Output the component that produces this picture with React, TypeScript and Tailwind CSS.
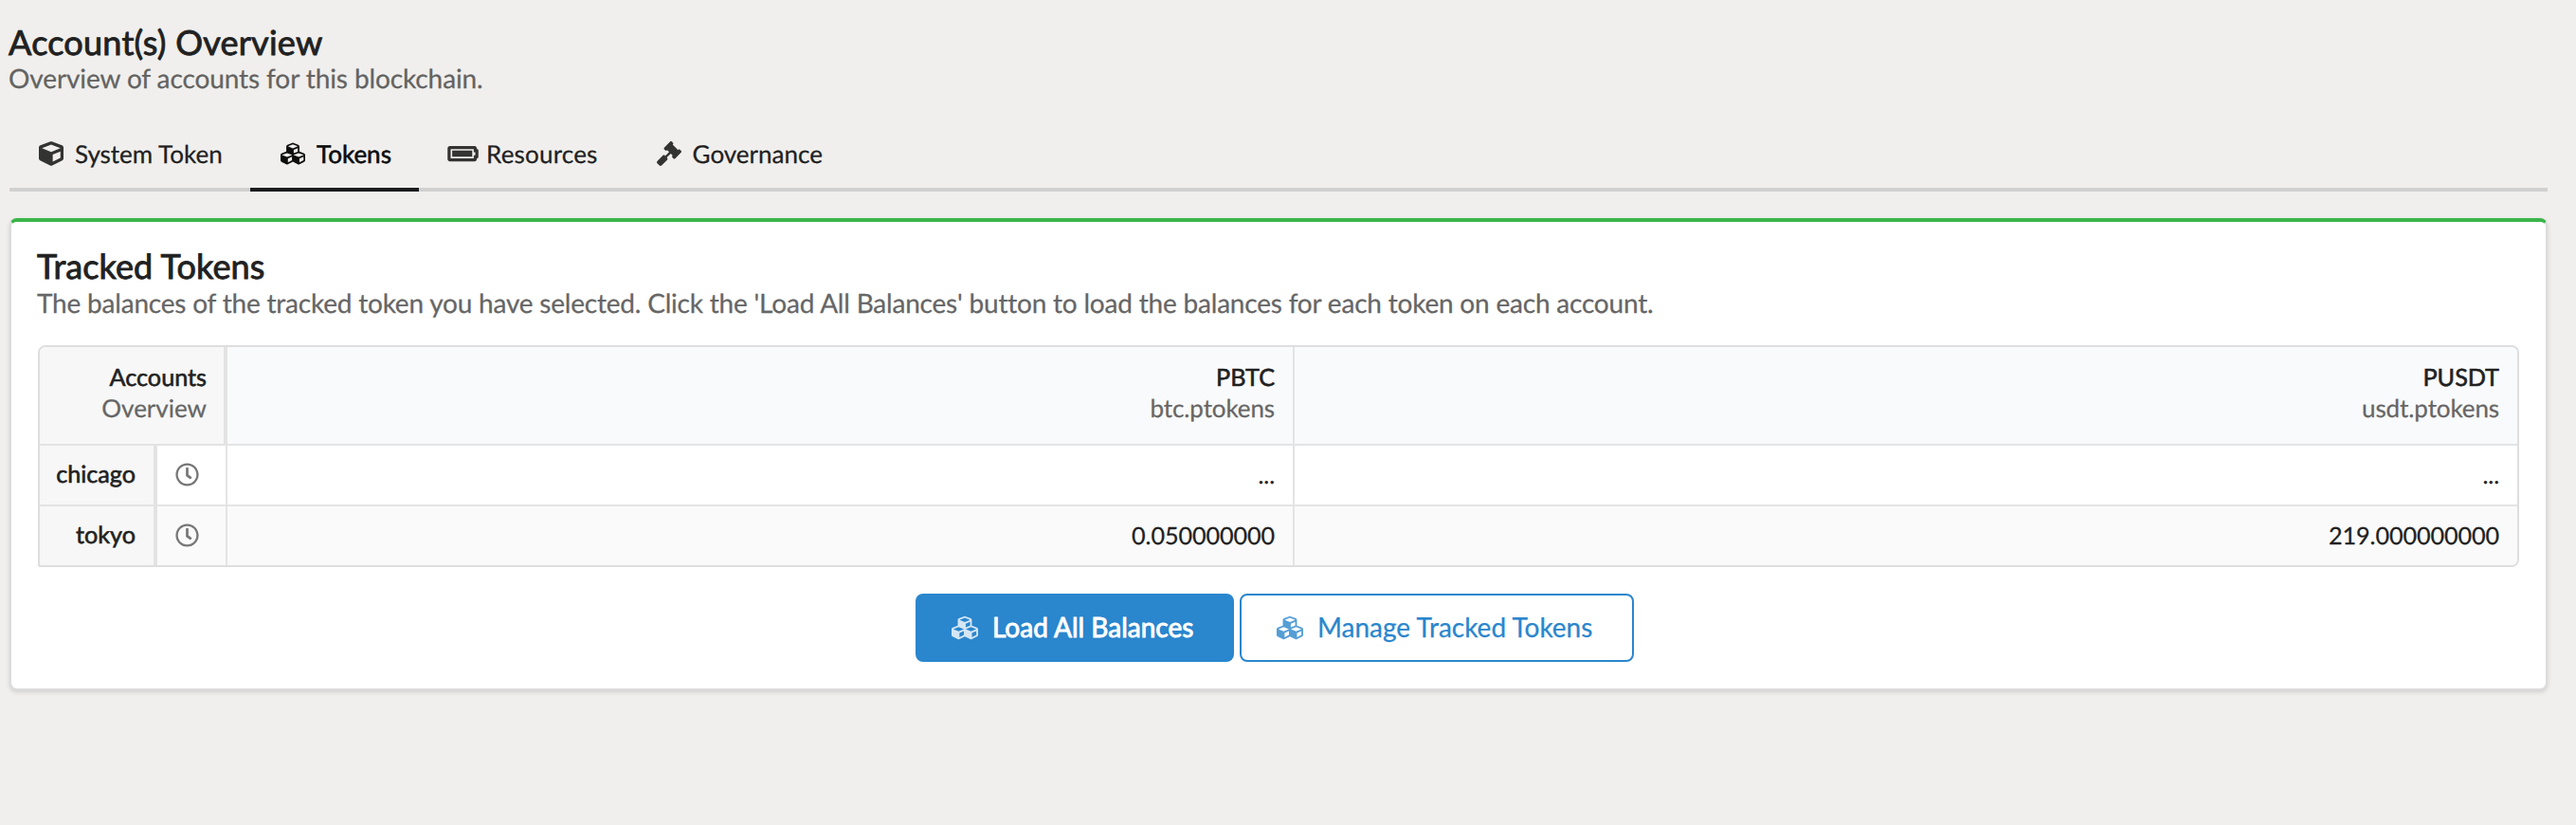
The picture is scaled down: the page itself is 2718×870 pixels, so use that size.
import React from "react";
import { FaCube, FaCubes, FaBatteryFull, FaGavel, FaRegClock } from "react-icons/fa";

const tokens = [
  { symbol: "PBTC", contract: "btc.ptokens" },
  { symbol: "PUSDT", contract: "usdt.ptokens" },
];

const rows = [
  { name: "chicago", values: ["...", "..."], bg: "bg-white" },
  { name: "tokyo", values: ["0.050000000", "219.000000000"], bg: "bg-[#fafafa]" },
];

const heavy = "[-webkit-text-stroke:0.9px_currentColor]";
const medium = "[-webkit-text-stroke:0.6px_currentColor]";

export default function App() {
  return (
    <div className="h-[870px] w-[2718px] bg-[#f0efed] pt-[22px] pl-[10px] pr-[30px] font-['Lato',sans-serif] text-[26px] leading-[32px] text-[#212121] [text-rendering:geometricPrecision] [-webkit-text-stroke:0.25px_currentColor]">
      <h1 className={`-ml-px text-[36px] leading-[44px] tracking-[0.25px] ${heavy}`}>Account(s) Overview</h1>
      <p className="-ml-px text-[28px] leading-[32px] tracking-[-0.1px] text-[#636362]">Overview of accounts for this blockchain.</p>

      <nav className="mt-[34px] flex h-[70px] border-b-4 border-[#d1d1d1]">
        <a className="flex h-[70px] w-[254px] items-center pl-[31px] pb-[10px]">
          <FaCube className="mr-[12px] size-[26px] text-[#333331]" />
          System Token
        </a>
        <a className="flex h-[70px] w-[178px] items-center border-b-4 border-[#1b1c1d] pl-[32px] pb-[6px] text-[#0d0d0d]">
          <FaCubes className="mr-[12px] size-[26px]" />
          <span className={medium}>Tokens</span>
        </a>
        <a className="flex h-[70px] items-center pl-[30px] pb-[10px]">
          <FaBatteryFull className="mr-[8px] h-[26px] w-[33px] text-[#333331]" />
          <span className="tracking-[0.2px]">Resources</span>
        </a>
        <a className="flex h-[70px] items-center pl-[62px] pb-[10px]">
          <FaGavel className="mr-[12px] size-[26px] text-[#333331]" />
          Governance
        </a>
      </nav>

      <section className="mt-[28px] h-[498px] rounded-[8px] border-2 border-t-4 border-[#dcdcdc] border-t-[#3ab54a] bg-white px-[28px] pt-[24px] shadow-[0_2px_4px_0_rgba(34,36,38,0.15)]">
        <h2 className={`-ml-px text-[36px] leading-[44px] tracking-[0.1px] ${heavy}`}>Tracked Tokens</h2>
        <p className="-ml-px pt-px text-[28px] leading-[32px] tracking-[-0.2px] text-[#666666]">
          The balances of the tracked token you have selected. Click the 'Load All Balances' button to load the balances for each token on each account.
        </p>

        <div className="mt-[29px] grid h-[234px] w-[2618px] grid-cols-[124px_74px_1126px_1fr] grid-rows-[104px_64px_62px] overflow-hidden rounded-[8px] rounded-bl-[2px] border-2 border-[#dedede] text-right text-[25.2px]">
          <div className="col-span-2 border-b-2 border-r-4 border-[#e3e3e3] bg-[#f7f7f7] pt-[17px] pr-[18px]">
            <div className={`leading-[31px] ${medium}`}>Accounts</div>
            <div className="text-[26px] text-[#666666]">Overview</div>
          </div>
          {tokens.map((token, i) => (
            <div key={token.symbol} className={`border-b-2 border-[#e3e4e5] bg-[#f9fafb] pt-[17px] pr-[19px] ${i === 0 ? "border-r-2" : ""}`}>
              <div className={`leading-[31px] ${medium}`}>{token.symbol}</div>
              <div className="text-[26px] tracking-[-0.1px] text-[#666666]">{token.contract}</div>
            </div>
          ))}
          {rows.map((row, i) => {
            const line = i === 0 ? "border-b-2" : "";
            return (
              <React.Fragment key={row.name}>
                <div className={`${line} border-r-4 border-[#e3e3e3] bg-[#f7f7f7] pt-[14px] pr-[19px] ${medium}`}>{row.name}</div>
                <div className={`${line} flex border-r-2 border-[#e4e4e4] pt-[18px] pl-[19px] ${row.bg}`}>
                  <FaRegClock className="size-[25px] text-[#777777]" />
                </div>
                <div className={`${line} border-r-2 border-[#e4e4e4] pt-[15px] pr-[19px] tracking-[-0.1px] ${row.bg}`}>{row.values[0]}</div>
                <div className={`${line} border-[#e4e4e4] pt-[15px] pr-[19px] tracking-[-0.1px] ${row.bg}`}>{row.values[1]}</div>
              </React.Fragment>
            );
          })}
        </div>

        <div className="mt-[28px] flex gap-[6px] pl-[926px] text-[28px]">
          <button className="flex h-[72px] w-[336px] items-center rounded-[8px] bg-[#2a86cd] pl-[38px] pb-[2px] text-white">
            <FaCubes className="mr-[15px] mt-[2px] size-[28px] opacity-80" />
            <span className={heavy}>Load All Balances</span>
          </button>
          <button className="flex h-[72px] w-[416px] items-center rounded-[8px] border-2 border-[#2a86cd] pl-[37px] pb-[2px] text-[#2a86cd]">
            <FaCubes className="mr-[15px] mt-[2px] size-[28px] opacity-80" />
            Manage Tracked Tokens
          </button>
        </div>
      </section>
    </div>
  );
}
